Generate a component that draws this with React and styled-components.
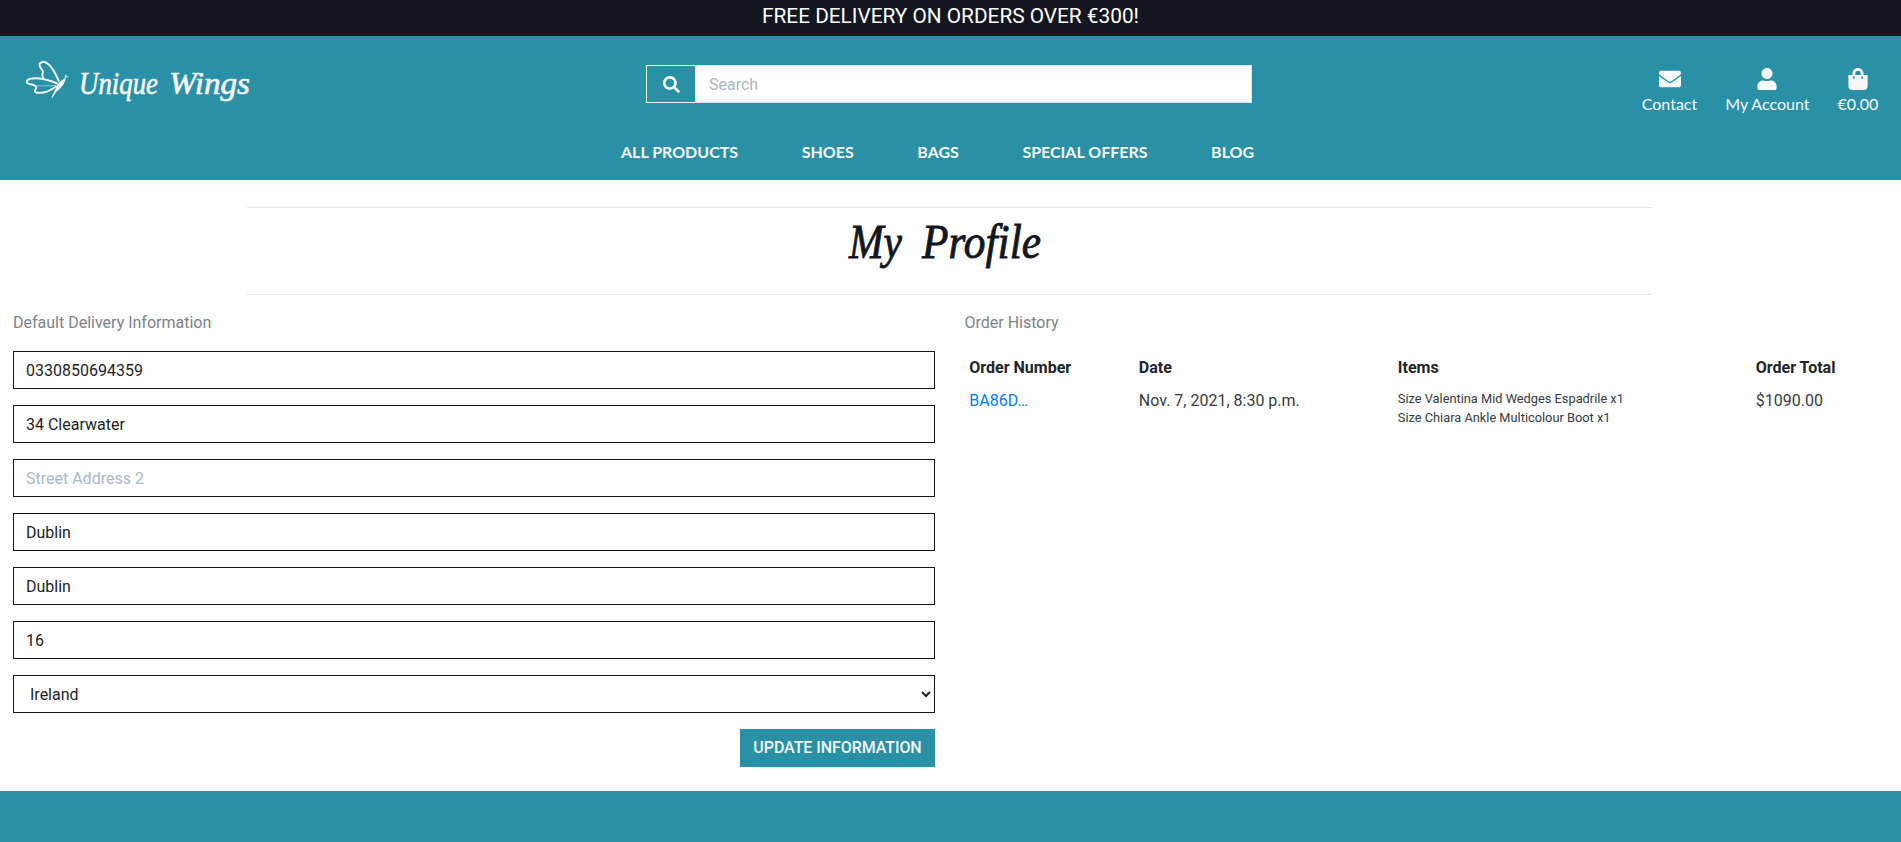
import React from "react";
import styled, { createGlobalStyle } from "styled-components";
import { FaEnvelope, FaSearch, FaShoppingBag, FaUser } from "react-icons/fa";

const teal = "#2990a6";
const ink = "#14161f";
const light = "#f5f9fa";

const GlobalStyle = createGlobalStyle`
  *, *::before, *::after { box-sizing: border-box; }
  body {
    margin: 0;
    background: #fefefe;
    color: #212529;
    font: 400 16px/1.5 Roboto, "Liberation Sans", sans-serif;
    overflow: hidden;
  }
  a { color: inherit; text-decoration: none; }
`;

const Page = styled.div`
  display: flex;
  flex-direction: column;
  height: 842px;
`;

const Banner = styled.div`
  height: 36px;
  flex: none;
  background: ${ink};
  color: #fff;
  font-size: 20.8px;
  line-height: 32px;
  text-align: center;
`;

const Header = styled.header`
  height: 144px;
  flex: none;
  background: ${teal};
  color: ${light};
  font-family: Lato, sans-serif;
`;

const TopRow = styled.div`
  display: grid;
  grid-template-columns: 646px 606px 1fr;
  align-items: start;
  height: 97px;
`;

const LogoLink = styled.a`
  display: block;
  padding: 20px 0 0 20px;
  svg { display: block; }
`;

const SearchBar = styled.form`
  display: flex;
  height: 38px;
  margin-top: 29px;
`;

const SearchButton = styled.button`
  display: flex;
  align-items: center;
  justify-content: center;
  width: 50px;
  padding: 0;
  border: 1px solid ${light};
  background: ${teal};
  color: ${light};
  font-size: 17px;
`;

const SearchInput = styled.input`
  flex: 1;
  margin-left: -1px;
  padding: 0 13px;
  border: 1px solid #dee2e6;
  border-radius: 0;
  background: #fff;
  font: 400 16px Roboto, sans-serif;
  &::placeholder { color: #aab7c4; opacity: 1; }
`;

const Actions = styled.div`
  display: flex;
  justify-content: flex-end;
  gap: 28px;
  padding: 32px 22.6px 0 0;
`;

const Action = styled.a`
  display: flex;
  flex-direction: column;
  align-items: center;
  line-height: 24px;
  svg { display: block; width: auto; height: 22px; margin-bottom: 2px; }
`;

const Nav = styled.nav`
  display: flex;
  gap: 63.6px;
  padding-left: 621px;
  font-weight: 700;
  line-height: 38px;
`;

const TitleBand = styled.div`
  width: 1405px;
  height: 88px;
  flex: none;
  margin: 27px 0 0 247px;
  border-top: 1px solid #e4e4e4;
  border-bottom: 1px solid #e4e4e4;
`;

const Title = styled.h1`
  margin: 0;
  padding: 8px 0 0 593px;
  font-weight: 400;
  svg { display: block; overflow: visible; }
`;

const Columns = styled.main`
  display: grid;
  grid-template-columns: 922px 923px;
  column-gap: 29.5px;
  padding: 16px 13px 24px;
`;

const SectionLabel = styled.p`
  margin: 0 0 16px;
  color: #7b848c;
`;

const ProfileForm = styled.form`
  display: flex;
  flex-direction: column;
  gap: 16px;
`;

const Field = styled.input`
  height: 38px;
  padding: 0 12px;
  border: 1px solid ${ink};
  border-radius: 0;
  background: #fff;
  color: #1c1e24;
  font: 400 16px Roboto, sans-serif;
  &::placeholder { color: #aab7c4; opacity: 1; }
`;

const CountrySelect = styled.select`
  height: 38px;
  padding: 0 0 0 12px;
  border: 1px solid ${ink};
  border-radius: 0;
  background: #fff;
  color: #1c1e24;
  font: 400 16px Roboto, sans-serif;
`;

const SubmitButton = styled.button`
  align-self: flex-end;
  width: 195px;
  height: 38px;
  padding: 0 0 2px;
  border: 0;
  background: ${teal};
  color: ${light};
  font: 500 16px Roboto, sans-serif;
  letter-spacing: -0.07px;
  white-space: nowrap;
`;

const OrderTable = styled.table`
  width: 923px;
  table-layout: fixed;
  border-collapse: collapse;
  th, td {
    padding: 4.5px 4.8px;
    text-align: left;
    vertical-align: top;
  }
  th { font-weight: 700; }
  td { color: #373b3f; }
`;

const Col = styled.col`
  width: ${(p) => p.$w}px;
`;

const OrderLink = styled.a`
  && { color: #007bff; }
`;

const ItemList = styled.ul`
  margin: 0;
  padding: 0;
  list-style: none;
  font-size: 12.8px;
  line-height: 19px;
`;

const Footer = styled.footer`
  flex: 1;
  background: ${teal};
`;

const ScriptText = styled.g`
  font-family: "Liberation Serif", serif;
  font-style: italic;
  font-size: ${(p) => p.$size}px;
`;

const Logo = () => (
  <svg width="240" height="60" viewBox="20 56 240 60" fill="none">
    <g stroke={light} strokeWidth="1.9" strokeLinecap="round" strokeLinejoin="round">
      <path d="M58.8 81C54 70 48 61.5 43 62C38 62.500 39 67 42.500 70.500C44 72.500 41 73.500 43 77.500" />
      <path d="M57 83.500C50 80 39 77.500 32 78.500C27 79 25.500 82 28 83.500C31 85 35 84 36 87C37 89 33 91 36 92.500C43 94 50 91 56 86.500" />
      <path d="M43 78.500L57 82.500M37 86L56 85.500" strokeWidth="0.5" />
      <path d="M65 76L68 77M65 79L66 75" strokeWidth="0.8" />
    </g>
    <path d="M65.500 78C66 81 62 88 57 91L52 98L51.500 97L56 88C57 84 60 81 65.500 78Z" fill={light} />
    <ScriptText $size={31.5} fill={light} stroke={light} strokeWidth="0.6">
      <text x="79" y="94" textLength="79" lengthAdjust="spacingAndGlyphs">Unique</text>
      <text x="169" y="94" textLength="81" lengthAdjust="spacingAndGlyphs">Wings</text>
    </ScriptText>
  </svg>
);

const TitleText = () => (
  <svg width="210" height="64" viewBox="840 216 210 64">
    <ScriptText $size={49} fill={ink} stroke={ink} strokeWidth="0.9">
      <text x="849" y="258" textLength="53" lengthAdjust="spacingAndGlyphs">My</text>
      <text x="922" y="258" textLength="119" lengthAdjust="spacingAndGlyphs">Profile</text>
    </ScriptText>
  </svg>
);

const navItems = ["ALL PRODUCTS", "SHOES", "BAGS", "SPECIAL OFFERS", "BLOG"];

const fields = [
  { value: "0330850694359" },
  { value: "34 Clearwater" },
  { value: "", placeholder: "Street Address 2" },
  { value: "Dublin" },
  { value: "Dublin" },
  { value: "16" },
];

export default function App() {
  return (
    <Page>
      <GlobalStyle />
      <Banner>FREE DELIVERY ON ORDERS OVER €300!</Banner>
      <Header>
        <TopRow>
          <LogoLink href="#"><Logo /></LogoLink>
          <SearchBar>
            <SearchButton type="button" aria-label="Search"><FaSearch /></SearchButton>
            <SearchInput placeholder="Search" />
          </SearchBar>
          <Actions>
            <Action href="#"><FaEnvelope />Contact</Action>
            <Action href="#"><FaUser />My Account</Action>
            <Action href="#"><FaShoppingBag />€0.00</Action>
          </Actions>
        </TopRow>
        <Nav>
          {navItems.map((item) => <a href="#" key={item}>{item}</a>)}
        </Nav>
      </Header>
      <TitleBand>
        <Title><TitleText /></Title>
      </TitleBand>
      <Columns>
        <section>
          <SectionLabel>Default Delivery Information</SectionLabel>
          <ProfileForm>
            {fields.map((f, i) => (
              <Field key={i} defaultValue={f.value} placeholder={f.placeholder} />
            ))}
            <CountrySelect defaultValue="IE">
              <option value="IE">Ireland</option>
            </CountrySelect>
            <SubmitButton type="button">UPDATE INFORMATION</SubmitButton>
          </ProfileForm>
        </section>
        <section>
          <SectionLabel>Order History</SectionLabel>
          <OrderTable>
            <colgroup>
              <Col $w={169.5} />
              <Col $w={259} />
              <Col $w={358} />
              <Col $w={136.5} />
            </colgroup>
            <thead>
              <tr>
                <th>Order Number</th>
                <th>Date</th>
                <th>Items</th>
                <th>Order Total</th>
              </tr>
            </thead>
            <tbody>
              <tr>
                <td><OrderLink href="#">BA86D…</OrderLink></td>
                <td>Nov. 7, 2021, 8:30 p.m.</td>
                <td>
                  <ItemList>
                    <li>Size Valentina Mid Wedges Espadrile x1</li>
                    <li>Size Chiara Ankle Multicolour Boot x1</li>
                  </ItemList>
                </td>
                <td>$1090.00</td>
              </tr>
            </tbody>
          </OrderTable>
        </section>
      </Columns>
      <Footer />
    </Page>
  );
}
